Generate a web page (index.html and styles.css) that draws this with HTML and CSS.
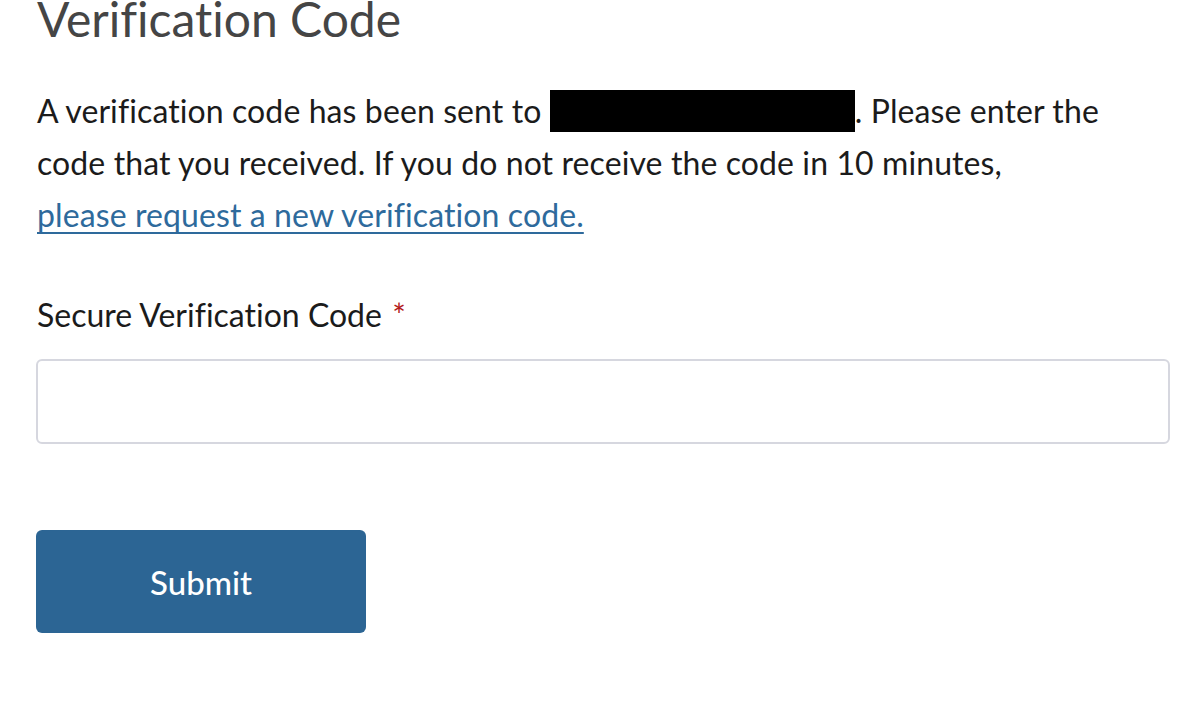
FILE: index.html
```html
<!DOCTYPE html>
<html lang="en">
<head>
<meta charset="utf-8">
<title>Verification Code</title>
<link rel="stylesheet" href="styles.css">
</head>
<body>
<main class="page">
  <h1 class="title">Verification Code</h1>
  <p class="intro">A verification code has been sent to <span class="redacted"></span>. Please enter the code that you received. If you do not receive the code in 10 minutes, <a class="link" href="#">please request a new verification code.</a></p>
  <form class="form">
    <label class="label" for="code">Secure Verification Code <span class="req">*</span></label>
    <input class="input" id="code" type="text">
    <button class="btn" type="button">Submit</button>
  </form>
</main>
</body>
</html>
```

FILE: styles.css
```css
html, body {
  margin: 0;
  padding: 0;
  background: #ffffff;
}
.page {
  padding: 0 22px 0 36px;
  font-family: Lato, "Open Sans", sans-serif;
  font-variant-ligatures: none;
  color: #1b1b1b;
}
.title {
  margin: -11px 0 0 1px;
  font-size: 48px;
  line-height: 60px;
  font-weight: 400;
  color: #454545;
}
.intro {
  margin: 36px 0 0 1px;
  font-size: 32px;
  line-height: 52px;
  letter-spacing: 0.1px;
  max-width: 1100px;
}
.redacted {
  display: inline-block;
  width: 305px;
  height: 42px;
  background: #000;
  vertical-align: -9px;
}
.link {
  display: inline-block;
  color: #2e6a9c;
  text-decoration: underline;
  text-underline-offset: 5px;
  text-decoration-thickness: 2px;
}
.form {
  display: flex;
  flex-direction: column;
  align-items: flex-start;
  margin-top: 52px;
}
.label {
  margin-left: 1px;
  font-size: 32px;
  line-height: 44px;
}
.req {
  color: #b31b1b;
  margin-left: 2px;
}
.input {
  box-sizing: border-box;
  margin-top: 22px;
  width: 100%;
  height: 85px;
  border: 2px solid #d6d7df;
  border-radius: 6px;
  background: #fff;
  font: inherit;
  font-size: 32px;
  padding: 0 16px;
}
.btn {
  margin-top: 86px;
  width: 330px;
  height: 103px;
  border: none;
  border-radius: 6px;
  background: #2c6594;
  color: #ffffff;
  font-family: Lato, "Open Sans", sans-serif;
  font-size: 33px;
  font-weight: 500;
}
```
